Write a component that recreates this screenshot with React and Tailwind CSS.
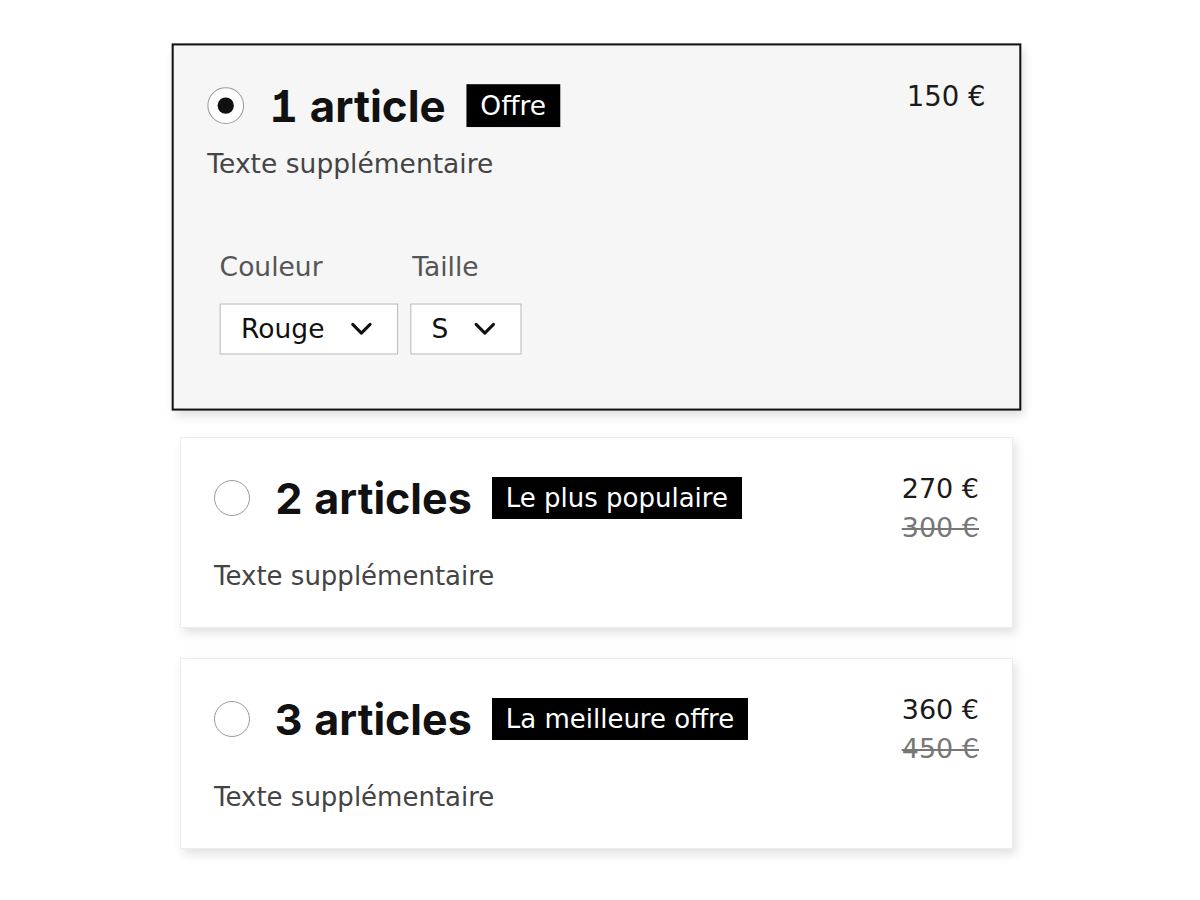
import React from "react";

const body = { fontFamily: '"DejaVu Sans", "Liberation Sans", sans-serif' };
const heading = { fontFamily: 'Inter, "Liberation Sans", sans-serif' };

function Radio({ checked }) {
  return (
    <span className="flex h-[36px] w-[36px] shrink-0 items-center justify-center rounded-full border border-[#9a9a9a] bg-white">
      {checked && <span className="h-[16px] w-[16px] rounded-full bg-[#111]" />}
    </span>
  );
}

function Chevron() {
  return (
    <svg width="22" height="14" viewBox="0 0 22 14" fill="none" className="shrink-0">
      <path d="M2.5 2.5 L11 11 L19.5 2.5" stroke="#111" strokeWidth="3" strokeLinecap="round" strokeLinejoin="round" />
    </svg>
  );
}

function Select({ value }) {
  return (
    <div className="flex h-[50px] items-center gap-[25px] border border-[#b8b8b8] bg-white pl-[20px] pr-[24px]">
      <span className="text-[26px] leading-none text-[#111]">{value}</span>
      <Chevron />
    </div>
  );
}

function Header({ checked, title, badge, price, oldPrice }) {
  return (
    <div className="flex items-start justify-between">
      <div className="flex h-[54px] items-center">
        <Radio checked={checked} />
        <span
          style={heading}
          className="ml-[25px] text-[43px] font-bold leading-none text-[#111] tabular-nums [font-feature-settings:'cv01','tnum']"
        >
          {title}
        </span>
        <span className="ml-[20px] flex h-[42px] items-center bg-black px-[14px] text-[26px] leading-none text-white">
          {badge}
        </span>
      </div>
      <div className="-mt-[2px] text-right text-[27px] leading-[39px]">
        <div className="text-[#1a1a1a]">{price}</div>
        {oldPrice && <div className="text-[#777] line-through decoration-[2px]">{oldPrice}</div>}
      </div>
    </div>
  );
}

export default function App() {
  return (
    <div style={body} className="min-h-[900px] bg-white pr-[7px] pt-[47px]">
      <div className="flex flex-col items-center gap-[30px]">
        <div className="w-[833px] scale-102 border-2 border-[#111] bg-[#f6f6f6] px-[33px] pb-[53px] pt-[32px] shadow-[3px_5px_10px_rgba(0,0,0,0.14)]">
          <Header checked title="1 article" badge="Offre" price="150 €" />
          <div className="mt-[13px] text-[26px] leading-[34px] text-[#444]">Texte supplémentaire</div>
          <div className="ml-[12px] mt-[67px] flex gap-[12px]">
            <div className="flex flex-col gap-[19px]">
              <span className="text-[26px] leading-[34px] text-[#555]">Couleur</span>
              <Select value="Rouge" />
            </div>
            <div className="flex flex-col gap-[19px]">
              <span className="pl-[2px] text-[26px] leading-[34px] text-[#555]">Taille</span>
              <Select value="S" />
            </div>
          </div>
        </div>

        <div className="w-[833px] border border-[#ececec] bg-white px-[33px] pb-[34px] pt-[33px] shadow-[3px_5px_10px_rgba(0,0,0,0.12)]">
          <Header title="2 articles" badge="Le plus populaire" price="270 €" oldPrice="300 €" />
          <div className="mt-[12px] text-[26px] leading-[34px] text-[#444]">Texte supplémentaire</div>
        </div>

        <div className="w-[833px] border border-[#ececec] bg-white px-[33px] pb-[34px] pt-[33px] shadow-[3px_5px_10px_rgba(0,0,0,0.12)]">
          <Header title="3 articles" badge="La meilleure offre" price="360 €" oldPrice="450 €" />
          <div className="mt-[12px] text-[26px] leading-[34px] text-[#444]">Texte supplémentaire</div>
        </div>
      </div>
    </div>
  );
}
